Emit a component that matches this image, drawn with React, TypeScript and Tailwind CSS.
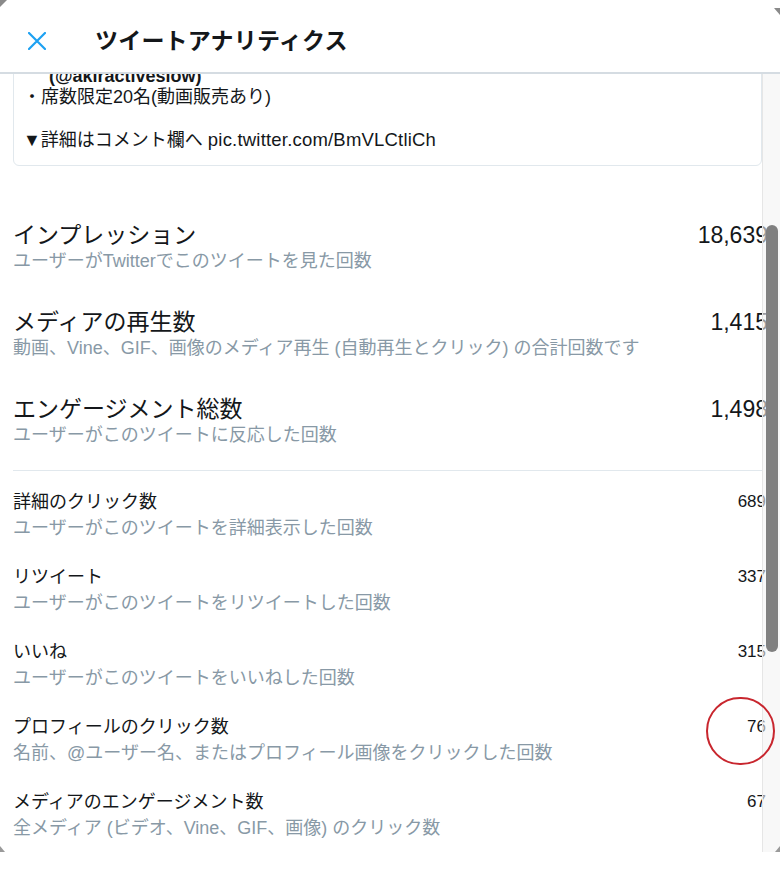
import React from "react";

const big = [
  { title: "インプレッション", desc: "ユーザーがTwitterでこのツイートを見た回数", value: "18,639" },
  { title: "メディアの再生数", desc: "動画、Vine、GIF、画像のメディア再生 (自動再生とクリック) の合計回数です", value: "1,415" },
  { title: "エンゲージメント総数", desc: "ユーザーがこのツイートに反応した回数", value: "1,498" },
];

const small = [
  { title: "詳細のクリック数", desc: "ユーザーがこのツイートを詳細表示した回数", value: "689" },
  { title: "リツイート", desc: "ユーザーがこのツイートをリツイートした回数", value: "337" },
  { title: "いいね", desc: "ユーザーがこのツイートをいいねした回数", value: "315" },
  { title: "プロフィールのクリック数", desc: "名前、@ユーザー名、またはプロフィール画像をクリックした回数", value: "76" },
  { title: "メディアのエンゲージメント数", desc: "全メディア (ビデオ、Vine、GIF、画像) のクリック数", value: "67" },
];

export default function App() {
  return (
    <div className="relative w-[780px] h-[870px] bg-white overflow-hidden text-[#14171a] font-['Liberation_Sans','Noto_Sans_CJK_JP',sans-serif]">
      {/* Header */}
      <header className="h-[74px] border-b-2 border-[#d5dce2] flex items-center pt-[10px]">
        <svg className="ml-[28px]" width="18" height="18" viewBox="0 0 18 18" fill="none">
          <path d="M1 1L17 17M17 1L1 17" stroke="#1da1f2" strokeWidth="2.2" strokeLinecap="round" />
        </svg>
        <h1 className="ml-[49px] text-[23px] font-bold leading-none tracking-[0.2px]">ツイートアナリティクス</h1>
      </header>

      {/* Scrolled content */}
      <div className="h-[778px] overflow-hidden">
        {/* Tweet card, scrolled partly under the header */}
        <div className="-mt-[21px] ml-[13px] mr-[18px] border border-[#e1e8ed] rounded-[6px] pl-[9px] pr-[12px] pt-[12px] pb-[14px] text-[18px] leading-[21px]">
          <p className="font-bold pl-[26px]">(@akiractiveslow)</p>
          <p>・席数限定20名(動画販売あり)</p>
          <p>&nbsp;</p>
          <p>
            ▼詳細はコメント欄へ <span className="text-[18.5px] tracking-[0.2px]">pic.twitter.com/BmVLCtliCh</span>
          </p>
        </div>

        <div className="mt-[55px] pl-[13px] pr-[12px] flex flex-col gap-[35px]">
          {big.map((m) => (
            <div key={m.title} className="flex justify-between items-start">
              <div>
                <div className="text-[23px] leading-[28px]">{m.title}</div>
                <div className="text-[18px] leading-[24px] text-[#8899a6]">{m.desc}</div>
              </div>
              <div className="text-[23px] leading-[28px]">{m.value}</div>
            </div>
          ))}
        </div>

        <div className="mt-[23px] ml-[13px] mr-[18px] h-px bg-[#e1e8ed]" />

        <div className="mt-[19px] pl-[13px] pr-[14px] flex flex-col gap-[23px]">
          {small.map((m) => (
            <div key={m.title} className="flex justify-between items-start">
              <div>
                <div className="text-[18px] leading-[24px]">{m.title}</div>
                <div className="text-[18px] leading-[28px] text-[#8899a6]">{m.desc}</div>
              </div>
              <div className="text-[17px] leading-[24px]">{m.value}</div>
            </div>
          ))}
        </div>
      </div>

      {/* Scrollbar overlay */}
      <div className="absolute left-[762px] top-[74px] w-[18px] h-[778px] bg-[#f3f3f3]/60 border-l border-[#e6e6e6]">
        <div className="mt-[151px] ml-[3px] w-[12px] h-[427px] rounded-full bg-[#808080]" />
      </div>

      {/* Red annotation circle */}
      <div className="absolute left-[706px] top-[697px] w-[69px] h-[68px] rounded-full border-2 border-[#c8262e]" />

      {/* Window corner marks */}
      <div className="absolute left-0 top-0 w-0 h-0 border-t-[7px] border-r-[7px] border-t-[#8a8a8a] border-r-transparent" />
      <div className="absolute right-0 top-[8px] w-0 h-0 border-t-[7px] border-l-[6px] border-t-[#8a8a8a] border-l-transparent" />
      <div className="absolute left-0 top-[846px] w-0 h-0 border-b-[6px] border-r-[5px] border-b-[#9a9a9a] border-r-transparent" />
      <div className="absolute right-0 top-[846px] w-0 h-0 border-b-[6px] border-l-[5px] border-b-[#9a9a9a] border-l-transparent" />
    </div>
  );
}
